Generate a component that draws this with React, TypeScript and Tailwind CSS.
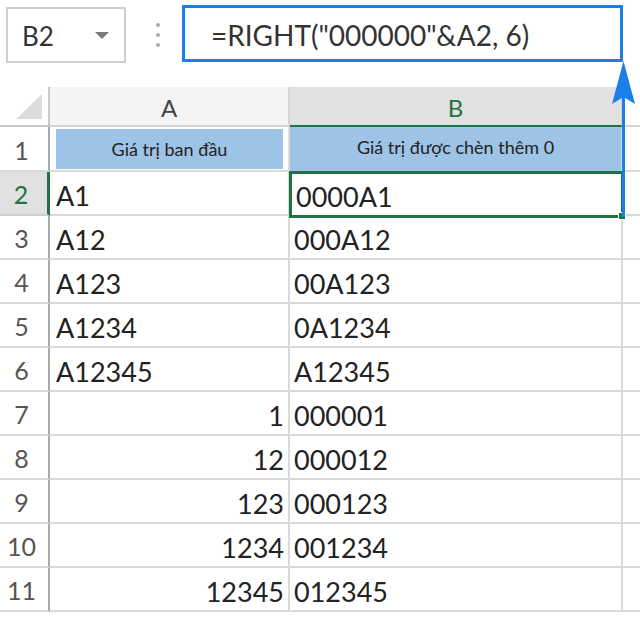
import React from 'react';

const rows: { n: number; a: string; b: string; num?: boolean }[] = [
  { n: 2, a: 'A1', b: '0000A1' },
  { n: 3, a: 'A12', b: '000A12' },
  { n: 4, a: 'A123', b: '00A123' },
  { n: 5, a: 'A1234', b: '0A1234' },
  { n: 6, a: 'A12345', b: 'A12345' },
  { n: 7, a: '1', b: '000001', num: true },
  { n: 8, a: '12', b: '000012', num: true },
  { n: 9, a: '123', b: '000123', num: true },
  { n: 10, a: '1234', b: '001234', num: true },
  { n: 11, a: '12345', b: '012345', num: true },
];

export default function App() {
  return (
    <div className="relative w-[640px] h-[625px] overflow-hidden bg-white font-['Lato',sans-serif] text-[#222]">
      {/* formula bar */}
      <div className="flex h-[87px] items-start">
        <div className="ml-[6px] mt-[7px] flex h-[56px] w-[120px] items-center justify-between border-2 border-[#cfcfcf] pl-[14px] pr-[15px]">
          <span className="pt-[2px] text-[26px] text-[#333]">B2</span>
          <span className="h-0 w-0 border-x-[7px] border-t-[7px] border-x-transparent border-t-[#7a7a7a]" />
        </div>
        <div className="ml-[30px] mt-[23px] flex flex-col gap-[6px]">
          <span className="h-[4px] w-[4px] rounded-full bg-[#aaa]" />
          <span className="h-[4px] w-[4px] rounded-full bg-[#aaa]" />
          <span className="h-[4px] w-[4px] rounded-full bg-[#aaa]" />
        </div>
        <div className="ml-[22px] mt-[5px] flex h-[57px] w-[441px] items-center border-[3px] border-[#1a7fe9] pl-[26px]">
          <span className="pt-[2px] text-[28px] text-[#333]">=RIGHT("000000"&amp;A2, 6)</span>
        </div>
      </div>

      {/* column headers */}
      <div className="flex h-[40px]">
        <div className="relative w-[50px] border-r-2 border-b-2 border-[#c8c8c8] bg-white">
          <svg className="absolute bottom-[6px] right-[6px]" width="26" height="25" viewBox="0 0 26 25">
            <polygon points="26,0 26,25 0,25" fill="#dcdcdc" />
          </svg>
        </div>
        <div className="flex w-[240px] items-center justify-center border-r-2 border-b-2 border-[#d4d4d4] bg-[#f4f4f4] pt-[3px] text-[24px] text-[#444]">
          A
        </div>
        <div className="flex w-[333px] items-center justify-center border-r-2 border-r-[#d4d4d4] border-b-2 border-b-[#217346] bg-[#e1e1e1] pt-[3px] text-[24px] text-[#217346]">
          B
        </div>
        <div className="flex-1 border-b-2 border-[#d4d4d4]" />
      </div>

      {/* row 1 */}
      <div className="flex h-[45px]">
        <div className="flex w-[50px] items-center justify-center border-r-2 border-b-2 border-r-[#a9a9a9] border-b-[#dadada] pr-[5px] pt-[4px] text-[25px] text-[#555]">
          1
        </div>
        <div className="flex w-[240px] border-r-2 border-b-2 border-[#dadada] pl-[6px] pr-[5px] pt-[2px] pb-[1px]">
          <div className="flex flex-1 items-center justify-center bg-[#9dc3e6] text-[18px] text-[#222]">
            Giá trị ban đầu
          </div>
        </div>
        <div className="flex w-[333px] items-center justify-center border-r-2 border-r-[#dadada] bg-[#9dc3e6] pb-[4px] text-[18px] text-[#222]">
          Giá trị được chèn thêm 0
        </div>
        <div className="flex-1 border-b-2 border-[#dadada]" />
      </div>

      {/* data rows */}
      {rows.map((r) => {
        const sel = r.n === 2;
        return (
          <div key={r.n} className="flex h-[44px]">
            <div
              className={
                sel
                  ? 'flex w-[50px] items-center justify-center border-r-[3px] border-b-2 border-r-[#217346] border-b-[#cfcfcf] bg-[#e1e1e1] pr-[5px] pt-[4px] text-[25px] text-[#217346]'
                  : 'flex w-[50px] items-center justify-center border-r-2 border-b-2 border-r-[#a9a9a9] border-b-[#dadada] pr-[5px] pt-[4px] text-[25px] text-[#555]'
              }
            >
              {r.n}
            </div>
            <div
              className={
                r.num
                  ? 'flex w-[240px] items-center justify-end border-r-2 border-b-2 border-[#dadada] pr-[4px] pt-[6px] text-[27px]'
                  : 'flex w-[240px] items-center border-r-2 border-b-2 border-[#dadada] pl-[6px] pt-[6px] text-[27px]'
              }
            >
              {r.a}
            </div>
            <div
              className={
                sel
                  ? 'relative -ml-[1px] -mt-[1px] flex h-[47px] w-[335px] items-center border-[3px] border-[#217346] pl-[4px] pt-[5px] text-[27px]'
                  : 'flex w-[333px] items-center border-r-2 border-b-2 border-[#dadada] pl-[4px] pt-[6px] text-[27px]'
              }
            >
              {r.b}
              {sel && <span className="absolute -bottom-[5px] -right-[5px] h-[8px] w-[8px] border border-white bg-[#217346]" />}
            </div>
            <div className="flex-1 border-b-2 border-[#dadada]" />
          </div>
        );
      })}

      {/* blue arrow annotation */}
      <div className="absolute left-[622px] top-[95px] h-[122px] w-[3px] bg-[#1a7fe9]" />
      <svg className="absolute left-[612px] top-[61px]" width="23" height="43" viewBox="0 0 23 43">
        <polygon points="11.5,0 23,43 11.5,36 0,43" fill="#1a7fe9" />
      </svg>
    </div>
  );
}
